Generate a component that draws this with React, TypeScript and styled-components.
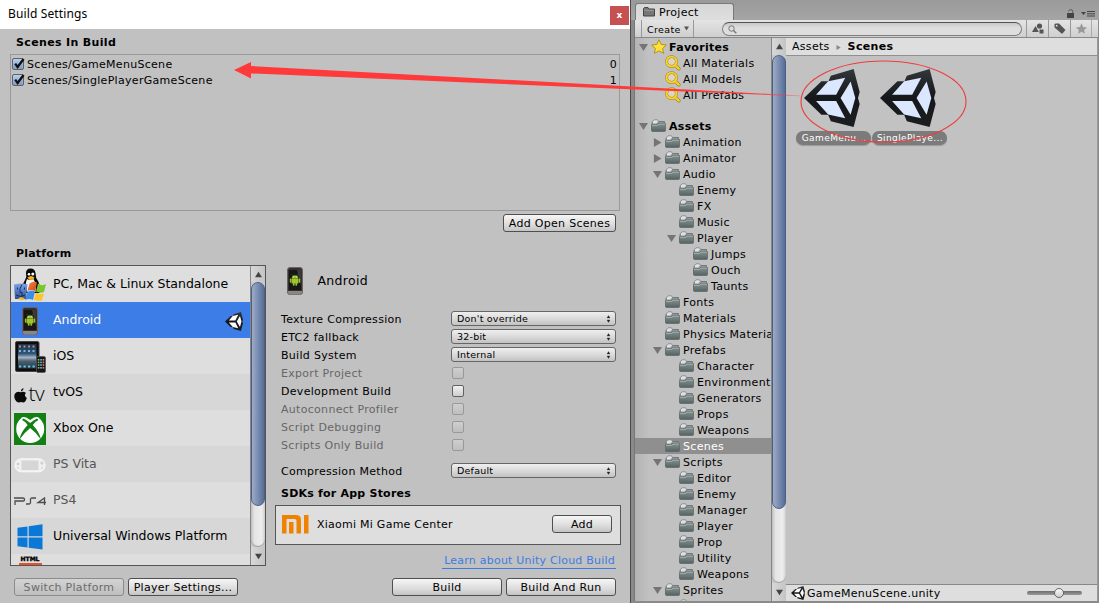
import React from 'react';
import styled, { createGlobalStyle, css } from 'styled-components';

const Global = createGlobalStyle`
  * { box-sizing: border-box; }
  body { margin: 0; overflow: hidden; background: #8a8a8a; }
`;

const Desktop = styled.div`
  position: relative;
  display: flex;
  width: 1099px;
  height: 603px;
  overflow: hidden;
  background: #8a8a8a;
  font: 11px/16px 'DejaVu Sans', sans-serif;
  letter-spacing: 0.3px;
  color: #000;
  white-space: nowrap;
`;

/* ---------- shared controls ---------- */

const Text = styled.span`
  padding-top: 2px;
`;

const Button = styled.button<{ $w: number; $disabled?: boolean }>`
  width: ${(p) => p.$w}px;
  height: 18px;
  padding: 2px 0 0;
  border: 1px solid ${(p) => (p.$disabled ? '#8c8c8c' : '#4f4f4f')};
  border-radius: 3px;
  background: ${(p) =>
    p.$disabled ? 'linear-gradient(#d3d3d3, #bfbfbf)' : 'linear-gradient(#f6f6f6, #dcdcdc 60%, #c4c4c4)'};
  color: ${(p) => (p.$disabled ? '#6c6c6c' : '#000')};
  font: inherit;
  line-height: 14px;
  letter-spacing: 0.3px;
`;

const Heading = styled.div<{ $ls?: number }>`
  font-weight: bold;
  letter-spacing: ${(p) => p.$ls ?? 0.35}px;
`;

const Box = styled.span<{ $blue?: boolean; $disabled?: boolean }>`
  display: flex;
  width: 12px;
  height: 12px;
  margin-bottom: ${(p) => (p.$blue ? 1 : 0)}px;
  border: 1px solid ${(p) => (p.$disabled ? '#999' : '#626262')};
  border-radius: 2px;
  background: ${(p) =>
    p.$blue
      ? 'linear-gradient(#b9cfee, #7d9dcb)'
      : p.$disabled
        ? 'linear-gradient(#cfcfcf, #bebebe)'
        : 'linear-gradient(#f0f0f0, #cfcfcf)'};
`;

const ScrollColumn = styled.div`
  display: flex;
  flex-direction: column;
  flex: none;
  width: 15px;
  border-left: 1px solid #858585;
  background: #c8c8c8;
`;
const ScrollButton = styled.div<{ $h: number }>`
  display: flex;
  align-items: center;
  justify-content: center;
  flex: none;
  height: ${(p) => p.$h}px;
  background: linear-gradient(90deg, #d8d8d8, #c4c4c4);
`;
const ScrollTrack = styled.div`
  flex: 1;
  border-radius: 7px;
  background: linear-gradient(90deg, #c2c2c2, #e4e4e4 25%, #ededed 75%, #d0d0d0);
  box-shadow: inset 0 -1px 1px #999;
`;
const ScrollThumb = styled.div<{ $h: number }>`
  height: ${(p) => p.$h}px;
  border: 1px solid #4c5f83;
  border-radius: 7px;
  background: linear-gradient(90deg, #9dabc4, #8193b4 40%, #637aa2 80%, #556d97);
`;

const Triangle = ({ dir, size = 7, color = '#444' }: { dir: 'up' | 'down' | 'right'; size?: number; color?: string }) => (
  <svg width={size} height={size} viewBox="0 0 10 10">
    <path
      fill={color}
      d={dir === 'up' ? 'M5 1 10 9H0Z' : dir === 'down' ? 'M0 1H10L5 9Z' : 'M1 0 9.5 5 1 10Z'}
    />
  </svg>
);

const UnityLogo = ({ w, h, light = '#dbe6ff' }: { w: number; h: number; light?: string }) => (
  <svg width={w} height={h} viewBox="0 0 167 172" preserveAspectRatio="none">
    <defs>
      <linearGradient id="unityBody" x1="0" y1="0" x2="0" y2="1">
        <stop offset="0" stopColor="#33363a" />
        <stop offset=".5" stopColor="#15171a" />
        <stop offset="1" stopColor="#1c1e20" />
      </linearGradient>
    </defs>
    <path
      fill="url(#unityBody)"
      d="M0 86 52 36H73L80 20 148 0 166 68 161 86 166 104 148 172 80 155 72 136H52Z"
    />
    <path fill={light} d="M36 76 72 36 123 26 96 76ZM36 95H96L123 146 72 135ZM109 86 139 37 153 86 139 136Z" />
  </svg>
);

/* ---------- build settings window ---------- */

const BuildWindow = styled.section`
  display: flex;
  flex-direction: column;
  flex: none;
  width: 630px;
  background: #c1c1c1;
`;
const TitleBar = styled.header`
  display: flex;
  justify-content: space-between;
  align-items: center;
  height: 29px;
  padding: 2px 1px 0 8px;
  background: #fff;
  font: 12px/16px 'Noto Sans', 'Open Sans', sans-serif;
  letter-spacing: 0.13px;
`;
const TitleText = styled.span`
  padding-bottom: 3px;
`;
const CloseButton = styled.button`
  width: 19px;
  height: 19px;
  padding: 0 0 1px;
  border: 0;
  background: #c75050;
  color: #fff;
  font: bold 9px/16px 'DejaVu Sans', sans-serif;
`;
const ScenesHeading = styled(Heading)`
  padding: 6px 0 3px 16px;
`;
const SceneList = styled.div`
  height: 157px;
  margin: 0 10px;
  padding: 1px 2px 0 1px;
  border: 1px solid #999;
`;
const SceneRow = styled.div`
  display: flex;
  align-items: center;
  height: 16px;
  gap: 3px;
  & > :last-child { margin-left: auto; }
`;
const AddScenesRow = styled.div`
  display: flex;
  justify-content: flex-end;
  padding: 3px 14px 0 0;
`;
const PlatformHeading = styled(Heading)`
  padding: 14px 0 3px 16px;
`;
const Columns = styled.div`
  display: flex;
  height: 301px;
  padding-left: 10px;
  gap: 9px;
`;
const PlatformPanel = styled.div`
  display: flex;
  width: 256px;
  border: 1px solid #555;
  overflow: hidden;
`;
const PlatformList = styled.div`
  flex: 1;
  overflow: hidden;
`;
const PlatformRow = styled.div<{ $bg: string; $fg?: string }>`
  display: flex;
  align-items: center;
  height: 36px;
  padding: 0 5px 1px 3px;
  gap: 7px;
  background: ${(p) => p.$bg};
  color: ${(p) => p.$fg ?? '#000'};
  font-size: 12.5px;
  letter-spacing: -0.02px;
`;
const IconSlot = styled.span`
  display: flex;
  align-items: center;
  justify-content: center;
  flex: none;
  width: 32px;
  height: 34px;
  margin-top: 2px;
`;
const ActiveMark = styled.span`
  display: flex;
  margin: 3px 2px 0 auto;
`;
const Settings = styled.div`
  width: 346px;
`;
const PlatformTitle = styled.div`
  display: flex;
  align-items: center;
  gap: 15px;
  height: 32px;
  padding-left: 11.5px;
  margin-bottom: 13px;
  font-size: 12.5px;
`;
const SettingRow = styled.div<{ $disabled?: boolean; $mt?: number }>`
  display: flex;
  align-items: center;
  height: 18px;
  margin-top: ${(p) => p.$mt ?? 0}px;
  padding-left: 6px;
  color: ${(p) => (p.$disabled ? '#676767' : '#000')};
`;
const SettingLabel = styled(Text)`
  width: 170px;
`;
const Select = styled.div`
  display: flex;
  align-items: center;
  justify-content: space-between;
  width: 165px;
  height: 15px;
  margin-bottom: 1px;
  padding: 0 4px 0 5px;
  border: 1px solid #666;
  border-radius: 3px;
  background: linear-gradient(#efefef, #d6d6d6 60%, #c2c2c2);
  font-size: 9.5px;
  line-height: 13px;
  letter-spacing: 0.22px;
`;
const BoxWrap = styled.span`
  padding-left: 1px;
`;
const SdkHeading = styled(Heading)`
  padding: 6px 0 3px 6px;
`;
const SdkCard = styled.div`
  display: flex;
  align-items: center;
  height: 40px;
  padding: 0 8px 2px 6px;
  border: 1px solid #555;
  background: #dedede;
  letter-spacing: 0.25px;
  & > svg { margin: 1px 8px 0 0; }
  & > button { margin-left: auto; }
`;
const LinkRow = styled.div`
  display: flex;
  justify-content: flex-end;
  padding: 7px 5px 0 0;
`;
const Link = styled.a`
  height: 17px;
  padding: 0 1px 0 2px;
  border-bottom: 1px solid #3d7ce0;
  color: #3d7ce0;
  line-height: 18px;
  letter-spacing: 0.22px;
`;
const Footer = styled.footer`
  display: flex;
  gap: 4px;
  padding: 12px 14px 0;
  & > :nth-child(3) { margin-left: auto; }
`;

const Check = () => (
  <svg width="13" height="13" viewBox="0 0 13 13" style={{ margin: '-2px -2px 0 0', flex: 'none', overflow: 'visible' }}>
    <path d="M2.2 6.6 4.6 10 10.6 2" fill="none" stroke="#111" strokeWidth="2.3" />
  </svg>
);

const SelectArrows = () => (
  <svg width="5" height="8" viewBox="0 0 5 8">
    <path d="M1 3 2.5 0.6 4 3ZM1 5 2.5 7.4 4 5Z" fill="#222" stroke="#222" strokeWidth=".3" />
  </svg>
);

const Phone = () => (
  <svg width="16" height="28" viewBox="0 0 16 28">
    <rect x=".5" y=".5" width="15" height="27" rx="2.5" fill="#34302f" stroke="#6b6463" />
    <path d="M1 24h14v1.5q0 2-2 2H3q-2 0-2-2Z" fill="#8d8580" />
    <rect x="2" y="3" width="12" height="20" fill="#171717" />
    <path d="M10 3h4v16Z" fill="#3a3a3a" />
    <path
      d="M4.8 11.2Q5 8.4 8 8.4T11.2 11.2ZM4.8 11.8h6.4v4.4H4.8ZM3 11.8h1.2v3.6H3ZM11.8 11.8H13v3.6h-1.2ZM6 16h1.4v2.4H6ZM8.6 16H10v2.4H8.6ZM5 7.2l1.4 2M11 7.2l-1.4 2"
      fill="#9fc52f"
      stroke="#9fc52f"
      strokeWidth=".3"
    />
    <path d="M6.2 9.6h.8v.7h-.8ZM9 9.6h.8v.7H9Z" fill="#fff" />
  </svg>
);

const DesktopIcon = () => (
  <svg width="32" height="33" viewBox="0 0 32 33">
    <defs>
      <linearGradient id="finder" x1="0" y1="0" x2="0" y2="1">
        <stop offset="0" stopColor="#7fa2e2" />
        <stop offset="1" stopColor="#2b509a" />
      </linearGradient>
      <linearGradient id="flagRed" x1="0" y1="0" x2="1" y2="1">
        <stop offset="0" stopColor="#f08a4a" />
        <stop offset="1" stopColor="#d8400f" />
      </linearGradient>
    </defs>
    <path d="M12 5Q12 .500 16.500 .500T21.500 5q0 5 2.500 8 2.500 4 1.500 12H9.500Q7 18 11 12q2-3 1-7Z" fill="#080808" />
    <path d="M13 11q3 2 6.500 0 3 5 2 13h-8q-3.500-6-.500-13Z" fill="#f4f4f4" />
    <circle cx="15" cy="6.200" r="1.300" fill="#fff" />
    <circle cx="18.800" cy="6" r="1.500" fill="#fff" />
    <path d="M13.500 9.500q3.500-3 7 0-1 2.500-3.500 2.500T13.500 9.500Z" fill="#f5b51a" />
    <path d="M0 16.500q6-1.500 13.500-.500L12 31H1Z" fill="url(#finder)" />
    <path d="M8 16.500q-3 4-2 8h2v6M2 27q5 3 9 0M3.500 19.500v2M10.500 19.500v2" stroke="#162f66" fill="none" />
    <path d="M4 31q3-4 7 0-2 2-7 0Z" fill="#f4b71c" />
    <path d="M15.500 15.500q4-3 7.500-1l-2 8.500q-4-2-7.500 0Z" fill="url(#flagRed)" />
    <path d="M24 15.500q4 3 8 .500L30 24q-4 1.500-8-.500Z" fill="#79c52c" />
    <path d="M13.500 24q4-2.500 7.500-.500l-2 8.500q-4-2-8 0Z" fill="#3b8ee8" />
    <path d="M22 24.500q4 2.500 8 1l-2.200 7q-4 1-7.800-1Z" fill="#fdc52b" />
  </svg>
);

const IosIcon = () => (
  <svg width="32" height="33" viewBox="0 0 32 33">
    <defs>
      <linearGradient id="pad" x1="0" y1="0" x2="0" y2="1">
        <stop offset="0" stopColor="#17324d" />
        <stop offset=".4" stopColor="#33577a" />
        <stop offset=".55" stopColor="#a3b4c2" />
        <stop offset=".7" stopColor="#4c5f70" />
        <stop offset="1" stopColor="#26384a" />
      </linearGradient>
    </defs>
    <rect x="1.500" y="1.500" width="23.500" height="30" rx="1.500" fill="#0d0d0d" stroke="#444" />
    <rect x="4" y="4" width="18.500" height="24.500" fill="url(#pad)" />
    {[5, 9.5, 14, 18.5].map((x) => (
      <g key={x}>
        <rect x={x} y="5.500" width="2" height="2" fill="#c98a72" />
        <rect x={x} y="10" width="2" height="2" fill="#7db4de" />
        <rect x={x} y="25.500" width="2.300" height="2" fill="#62c7d9" />
      </g>
    ))}
    <rect x="22.500" y="16.500" width="9" height="16" rx="1.500" fill="#161616" stroke="#555" strokeWidth=".8" />
    {[19, 21.6, 24.2, 27].map((y) => (
      <g key={y}>
        <rect x="23.800" y={y} width="1.600" height="1.600" fill="#6fc17c" />
        <rect x="26.200" y={y} width="1.600" height="1.600" fill="#7fb1e0" />
        <rect x="28.600" y={y} width="1.600" height="1.600" fill="#d9896b" />
      </g>
    ))}
  </svg>
);

const TvSlot = styled(IconSlot)`
  justify-content: flex-start;
  gap: 1.5px;
  font: 300 21px/20px 'Open Sans', 'Noto Sans', sans-serif;
  letter-spacing: -0.4px;
  & > svg { margin-top: 5px; }
`;
const AppleIcon = () => (
  <svg width="13" height="15" viewBox="0 0 13 15" style={{ flex: 'none' }}>
    <path
      d="M9.500 0Q9.500 2.800 6.800 3.400 6.800 1 9.500 0ZM6.800 4.300Q9.500 2.800 12 5q-2.600 2.400.800 5-1.400 4.500-3.600 4.500Q7 13.600 5 14.500 2.500 14.500.800 11-.800 6 2.500 4.200 4.500 3.400 6.800 4.300Z"
      fill="#0a0a0a"
    />
  </svg>
);
const XboxIcon = () => (
  <svg width="32" height="32" viewBox="0 0 32 32">
    <path fill="#128012" d="M0 0h32v32H0z" />
    <circle cx="16.200" cy="16" r="14" fill="#fff" />
    <path d="M7 4q4-1 9.200 3Q21 3 25.400 4 20.500.500 16.200 1.500 11 .500 7 4Z" fill="#128012" />
    <path d="M9.500 5.500Q13 7 16.200 10 19.500 7 23 5.500L24.500 7Q21 8.500 18.800 12q6.600 7 8.200 14.500Q22 19.500 16.200 15 10.500 19.500 5.500 26.500 7 18.500 13.700 12 11.500 8.500 8 7Z" fill="#128012" />
  </svg>
);
const VitaIcon = () => (
  <svg width="32" height="16" viewBox="0 0 32 16">
    <rect x="1" y="1.800" width="30" height="13" rx="6" fill="#f0f0f0" stroke="#f8f8f8" />
    <rect x="7.500" y="3.500" width="17" height="9.500" fill="#d6d6d6" />
    <circle cx="4" cy="7" r="1.300" fill="#ccc" />
    <path d="M28 4v4M26 6h4M3 11h2M27 11h2" stroke="#ccc" />
  </svg>
);
const Ps4Icon = () => (
  <svg width="32" height="8" viewBox="0 0 32 8">
    <path
      d="M0 1H9Q10.500 1 10.500 2.600T9 4H1V8M12 7h3q1.500 0 1.500-1.500V2.500Q16.500 1 18 1h4M30.500 8V1L24 5.500h8"
      fill="none"
      stroke="#4c4c4c"
      strokeWidth="1.300"
    />
  </svg>
);
const WindowsIcon = () => (
  <svg width="26" height="26" viewBox="0 0 26 26">
    <path
      d="M.500 3.800 10.500 2.400V12.300H.500ZM11.700 2.200 25.500.300V12.300H11.700ZM.500 13.500H10.500V23.600L.500 22.200ZM11.700 13.500H25.500V25.500L11.700 23.700Z"
      fill="#0a78d6"
    />
  </svg>
);
const HtmlSlot = styled(IconSlot)`
  flex-direction: column;
  justify-content: flex-start;
  align-self: flex-start;
  font: 900 6px/6px 'DejaVu Sans', sans-serif;
  -webkit-text-stroke: 0.4px #000;
`;
const HtmlBar = styled.span`
  width: 23px;
  height: 20px;
  margin-top: 1px;
  background: #e0532c;
`;
const MiIcon = () => (
  <svg width="27" height="19" viewBox="0 0 27 19">
    <path d="M0 0H14Q19 0 19 5V18.500H14.500V6Q14.500 4 12.500 4H4.500V18.500H0ZM7 7H11.500V18.500H7ZM22 0H26.500V18.500H22Z" fill="#ef8200" />
  </svg>
);

const SelectRow = ({ label, value, mt }: { label: string; value: string; mt?: number }) => (
  <SettingRow $mt={mt}>
    <SettingLabel>{label}</SettingLabel>
    <Select>
      {value}
      <SelectArrows />
    </Select>
  </SettingRow>
);
const ToggleRow = ({ label, disabled }: { label: string; disabled?: boolean }) => (
  <SettingRow $disabled={disabled}>
    <SettingLabel>{label}</SettingLabel>
    <BoxWrap>
      <Box $disabled={disabled} />
    </BoxWrap>
  </SettingRow>
);

const LIGHT = '#dedede';
const DARK = '#d7d7d7';

const BuildSettings = () => (
  <BuildWindow>
    <TitleBar>
      <TitleText>Build Settings</TitleText>
      <CloseButton>x</CloseButton>
    </TitleBar>
    <ScenesHeading>Scenes In Build</ScenesHeading>
    <SceneList>
      {['Scenes/GameMenuScene', 'Scenes/SinglePlayerGameScene'].map((name, i) => (
        <SceneRow key={name}>
          <Box $blue>
            <Check />
          </Box>
          <Text>{name}</Text>
          <Text>{i}</Text>
        </SceneRow>
      ))}
    </SceneList>
    <AddScenesRow>
      <Button $w={113}>Add Open Scenes</Button>
    </AddScenesRow>
    <PlatformHeading $ls={0.2}>Platform</PlatformHeading>
    <Columns>
      <PlatformPanel>
        <PlatformList>
          <PlatformRow $bg={LIGHT}><IconSlot><DesktopIcon /></IconSlot>PC, Mac &amp; Linux Standalone</PlatformRow>
          <PlatformRow $bg="#3d7de7" $fg="#fff">
            <IconSlot><Phone /></IconSlot>Android
            <ActiveMark><UnityLogo w={18} h={19} light="#fff" /></ActiveMark>
          </PlatformRow>
          <PlatformRow $bg={LIGHT}><IconSlot><IosIcon /></IconSlot>iOS</PlatformRow>
          <PlatformRow $bg={DARK}><TvSlot><AppleIcon />tv</TvSlot>tvOS</PlatformRow>
          <PlatformRow $bg={LIGHT}><IconSlot><XboxIcon /></IconSlot>Xbox One</PlatformRow>
          <PlatformRow $bg={DARK} $fg="#555"><IconSlot><VitaIcon /></IconSlot>PS Vita</PlatformRow>
          <PlatformRow $bg={LIGHT} $fg="#555"><IconSlot><Ps4Icon /></IconSlot>PS4</PlatformRow>
          <PlatformRow $bg={DARK}><IconSlot><WindowsIcon /></IconSlot>Universal Windows Platform</PlatformRow>
          <PlatformRow $bg={LIGHT}><HtmlSlot>HTML<HtmlBar /></HtmlSlot></PlatformRow>
        </PlatformList>
        <ScrollColumn>
          <ScrollButton $h={16}><Triangle dir="up" /></ScrollButton>
          <ScrollTrack><ScrollThumb $h={224} /></ScrollTrack>
          <ScrollButton $h={18}><Triangle dir="down" /></ScrollButton>
        </ScrollColumn>
      </PlatformPanel>
      <Settings>
        <PlatformTitle><Phone />Android</PlatformTitle>
        <SelectRow label="Texture Compression" value="Don't override" />
        <SelectRow label="ETC2 fallback" value="32-bit" />
        <SelectRow label="Build System" value="Internal" />
        <ToggleRow label="Export Project" disabled />
        <ToggleRow label="Development Build" />
        <ToggleRow label="Autoconnect Profiler" disabled />
        <ToggleRow label="Script Debugging" disabled />
        <ToggleRow label="Scripts Only Build" disabled />
        <SelectRow label="Compression Method" value="Default" mt={8} />
        <SdkHeading $ls={0.22}>SDKs for App Stores</SdkHeading>
        <SdkCard>
          <MiIcon />
          <Text>Xiaomi Mi Game Center</Text>
          <Button $w={60}>Add</Button>
        </SdkCard>
        <LinkRow><Link>Learn about Unity Cloud Build</Link></LinkRow>
      </Settings>
    </Columns>
    <Footer>
      <Button $w={110} $disabled>Switch Platform</Button>
      <Button $w={110}>Player Settings...</Button>
      <Button $w={110}>Build</Button>
      <Button $w={110}>Build And Run</Button>
    </Footer>
  </BuildWindow>
);

/* ---------- project window ---------- */

const ProjectWindow = styled.section`
  display: flex;
  flex-direction: column;
  flex: 1;
  min-width: 0;
  padding-bottom: 2px;
  border-left: 1px solid #4a4a4a;
  background: #8a8a8a;
`;
const TabStrip = styled.div`
  display: flex;
  justify-content: space-between;
  height: 20px;
  padding: 3px 3px 0 4px;
  background: linear-gradient(#9a9a9a, #a5a5a5);
`;
const Tab = styled.div`
  display: flex;
  align-items: center;
  gap: 4px;
  width: 99px;
  padding-left: 7px;
  border: 1px solid #787878;
  border-bottom: 0;
  border-radius: 3px 3px 0 0;
  background: linear-gradient(#d6d6d6, #dedede);
`;
const TabTools = styled.div`
  display: flex;
  align-items: center;
  gap: 6px;
  padding-top: 4px;
`;
const Frame = styled.div`
  display: flex;
  flex-direction: column;
  flex: 1;
  min-height: 0;
  margin: 0 1px 0 3px;
  border-left: 1px solid #777;
`;
const Toolbar = styled.div`
  display: flex;
  align-items: stretch;
  height: 18px;
  padding-left: 6px;
  border-bottom: 1px solid #888;
  background: linear-gradient(#e4e4e4, #cfcfcf);
`;
const CreateButton = styled.div`
  display: flex;
  align-items: center;
  justify-content: space-between;
  width: 53px;
  padding: 0 4px 0 5px;
  border: solid #999;
  border-width: 0 1px;
  font-size: 9.5px;
  letter-spacing: 0.35px;
`;
const Search = styled.div`
  display: flex;
  align-items: center;
  width: 300px;
  height: 14px;
  margin: 2px 4px 0 28px;
  padding-left: 5px;
  border: 1px solid #808080;
  border-top-color: #555;
  border-radius: 7px;
  background: linear-gradient(#c8c8c8, #dedede 40%);
`;
const ToolButton = styled.div`
  display: flex;
  align-items: center;
  justify-content: center;
  width: 22px;
  border-left: 1px solid #999;
  &:last-child { border-right: 1px solid #aaa; }
`;
const Panes = styled.div`
  display: flex;
  flex: 1;
  min-height: 0;
`;
const Tree = styled.div`
  width: 136px;
  padding-top: 1px;
  overflow: hidden;
  background: linear-gradient(90deg, #b4b4b4, #c1c1c1 14px);
`;
const TreeRow = styled.div<{ $level: number; $bold?: boolean; $selected?: boolean; $gap?: boolean }>`
  display: flex;
  align-items: center;
  height: 16px;
  margin-top: ${(p) => (p.$gap ? 15 : 0)}px;
  padding-left: ${(p) => 4 + p.$level * 14}px;
  ${(p) => p.$bold && css`font-weight: bold;`}
  ${(p) => p.$selected && css`background: #8f8f8f; color: #fff;`}
`;
const ArrowSlot = styled.span`
  display: flex;
  flex: none;
  width: 12px;
`;
const TreeIcon = styled.span`
  display: flex;
  flex: none;
  width: 18px;
  margin-bottom: 1px;
`;
const Content = styled.div`
  display: flex;
  flex-direction: column;
  flex: 1;
  border-right: 1px solid #999;
  background: #c2c2c2;
`;
const Breadcrumb = styled.div`
  display: flex;
  align-items: center;
  gap: 6.5px;
  height: 18px;
  padding: 1px 0 0 6px;
  border-bottom: 1px solid #909090;
  background: #dedede;
`;
const AssetGrid = styled.div`
  display: flex;
  flex: 1;
  gap: 1px;
  padding: 13px 0 0 10px;
`;
const Asset = styled.div`
  display: flex;
  flex-direction: column;
  align-items: center;
  width: 75px;
  & > svg { margin-right: 3px; }
`;
const AssetName = styled.span`
  width: 75px;
  height: 14px;
  margin-top: 4px;
  padding-left: 1px;
  border-radius: 7px;
  background: #7b7b7b;
  box-shadow: 0 1px 1px #999;
  color: #fff;
  font-size: 9px;
  line-height: 15px;
  letter-spacing: 0.4px;
  text-align: center;
`;
const StatusBar = styled.div`
  display: flex;
  align-items: center;
  height: 17px;
  padding: 0 15px 0 5px;
  border-top: 1px solid #888;
  background: #dedede;
  & > span { margin-left: 2px; }
`;
const Slider = styled.div`
  display: flex;
  align-items: center;
  justify-content: center;
  width: 55px;
  height: 4px;
  margin-left: auto;
  padding-left: 9px;
  border-radius: 2px;
  background: linear-gradient(#6e6e6e, #9a9a9a);
`;
const Knob = styled.div`
  flex: none;
  width: 10px;
  height: 10px;
  border: 1px solid #666;
  border-radius: 50%;
  background: linear-gradient(#fafafa, #cfcfcf);
`;

const Folder = () => (
  <svg width="15" height="13" viewBox="0 0 15 13">
    <defs>
      <linearGradient id="folder" x1="0" y1="0" x2="0" y2="1">
        <stop offset="0" stopColor="#869292" />
        <stop offset="1" stopColor="#566161" />
      </linearGradient>
    </defs>
    <path d="M1 11V3.500L2 2.500H13.500V11Z" fill="#8b9696" stroke="#6a7474" strokeWidth=".900" />
    <path d="M1.500 5V2.500L3 .800H6.500L7.500 2.600 5.800 5Z" fill="#dfe2e2" stroke="#7b8484" strokeWidth=".800" />
    <path d="M.500 5.800H6L7.500 4.500H14.500V11.500q0 1-1 1h-12q-1 0-1-1Z" fill="url(#folder)" stroke="#5a6565" strokeWidth=".700" />
    <path d="M1 6.400H6.500L8 5.100H14" stroke="#b0baba" strokeWidth=".800" fill="none" />
  </svg>
);
const TabFolder = () => (
  <svg width="12" height="10" viewBox="0 0 12 10">
    <path d="M.500 9V1.500L1.500.500H5L6 2H11.500V9Z" fill="#777" stroke="#444" />
    <path d="M1 3.300h10" stroke="#a5a5a5" strokeWidth=".800" />
  </svg>
);
const Star = () => (
  <svg width="16" height="15" viewBox="0 0 16 15">
    <path d="M8 .800 10.200 5.400 15.300 6 11.600 9.400 12.600 14.300 8 11.900 3.400 14.300 4.400 9.400.700 6 5.800 5.400Z" fill="#ffe13a" stroke="#b28a10" strokeWidth=".900" />
  </svg>
);
const Lens = () => (
  <svg width="16" height="16" viewBox="0 0 16 16">
    <path d="M9.800 10 13.800 13.800" stroke="#a57d12" strokeWidth="3.400" strokeLinecap="round" />
    <circle cx="6.500" cy="6.500" r="4.900" fill="#d9d6c4" stroke="#a57d12" strokeWidth="2.800" />
    <circle cx="6.500" cy="6.500" r="4.900" fill="none" stroke="#f8d42c" strokeWidth="1.900" />
    <path d="M10 10.200 13.800 13.800" stroke="#f8d42c" strokeWidth="2.200" strokeLinecap="round" />
  </svg>
);

type Node = { name: string; level: number; open?: boolean; closed?: boolean; icon?: 'star' | 'lens'; selected?: boolean };
const nodes: Node[] = [
  { name: 'Favorites', level: 0, open: true, icon: 'star' },
  { name: 'All Materials', level: 1, icon: 'lens' },
  { name: 'All Models', level: 1, icon: 'lens' },
  { name: 'All Prefabs', level: 1, icon: 'lens' },
  { name: 'Assets', level: 0, open: true },
  { name: 'Animation', level: 1, closed: true },
  { name: 'Animator', level: 1, closed: true },
  { name: 'Audio', level: 1, open: true },
  { name: 'Enemy', level: 2 },
  { name: 'FX', level: 2 },
  { name: 'Music', level: 2 },
  { name: 'Player', level: 2, open: true },
  { name: 'Jumps', level: 3 },
  { name: 'Ouch', level: 3 },
  { name: 'Taunts', level: 3 },
  { name: 'Fonts', level: 1 },
  { name: 'Materials', level: 1 },
  { name: 'Physics Materials', level: 1 },
  { name: 'Prefabs', level: 1, open: true },
  { name: 'Character', level: 2 },
  { name: 'Environment', level: 2 },
  { name: 'Generators', level: 2 },
  { name: 'Props', level: 2 },
  { name: 'Weapons', level: 2 },
  { name: 'Scenes', level: 1, selected: true },
  { name: 'Scripts', level: 1, open: true },
  { name: 'Editor', level: 2 },
  { name: 'Enemy', level: 2 },
  { name: 'Manager', level: 2 },
  { name: 'Player', level: 2 },
  { name: 'Prop', level: 2 },
  { name: 'Utility', level: 2 },
  { name: 'Weapons', level: 2 },
  { name: 'Sprites', level: 1, open: true },
  { name: '', level: 2 },
];

const Project = () => (
  <ProjectWindow>
    <TabStrip>
      <Tab><TabFolder /><Text>Project</Text></Tab>
      <TabTools>
        <svg width="9" height="9" viewBox="0 0 9 9">
          <path d="M1 4h7v5H1Z" fill="#444" />
          <path d="M2.500 2.500Q3 .600 4.800.600T6.800 2.500V4" fill="none" stroke="#555" />
        </svg>
        <svg width="15" height="7" viewBox="0 0 15 7">
          <path d="M0 2H5L2.500 5Z" fill="#444" />
          <path d="M6 1.500h8M6 3.800h8M6 6h8" stroke="#444" />
        </svg>
      </TabTools>
    </TabStrip>
    <Frame>
      <Toolbar>
        <CreateButton><Text>Create</Text><Triangle dir="down" size={5} color="#555" /></CreateButton>
        <Search>
          <svg width="9" height="9" viewBox="0 0 9 9">
            <circle cx="3.500" cy="3.500" r="2.700" fill="none" stroke="#777" />
            <path d="M5.500 5.500 8.300 8.300" stroke="#777" strokeWidth="1.400" />
          </svg>
        </Search>
        <ToolButton>
          <svg width="12" height="11" viewBox="0 0 12 11">
            <path d="M3.500 3 6.800 9H0Z" fill="#555" />
            <circle cx="7.500" cy="3" r="2.600" fill="#555" />
            <path d="M7.500 6.500h4V10.500h-4Z" fill="#555" />
          </svg>
        </ToolButton>
        <ToolButton>
          <svg width="12" height="11" viewBox="0 0 12 11">
            <path d="M.500 1.500 1.500.500H5L11.500 7 8.500 10.500H7.500L.500 4.500Z" fill="#555" />
            <circle cx="2.700" cy="2.700" r=".900" fill="#ddd" />
          </svg>
        </ToolButton>
        <ToolButton>
          <svg width="11" height="11" viewBox="0 0 16 15">
            <path d="M8 0 10.300 5.300 16 5.900 11.800 9.600 12.900 15 8 12.200 3.100 15 4.200 9.600 0 5.900 5.700 5.300Z" fill="#999" />
          </svg>
        </ToolButton>
      </Toolbar>
      <Panes>
        <Tree>
          {nodes.map((n, i) => (
            <TreeRow key={i} $level={n.level} $bold={n.level === 0} $selected={n.selected} $gap={n.name === 'Assets'}>
              <ArrowSlot>
                {n.open && <Triangle dir="down" size={9} color="#757575" />}
                {n.closed && <Triangle dir="right" size={9} color="#757575" />}
              </ArrowSlot>
              <TreeIcon>{n.icon === 'star' ? <Star /> : n.icon === 'lens' ? <Lens /> : <Folder />}</TreeIcon>
              <Text>{n.name}</Text>
            </TreeRow>
          ))}
        </Tree>
        <ScrollColumn>
          <ScrollButton $h={17}><Triangle dir="up" /></ScrollButton>
          <ScrollTrack><ScrollThumb $h={454} /></ScrollTrack>
          <ScrollButton $h={18}><Triangle dir="down" /></ScrollButton>
        </ScrollColumn>
        <Content>
          <Breadcrumb>
            <span>Assets</span>
            <Triangle dir="right" size={5} color="#888" />
            <Heading $ls={0.35}>Scenes</Heading>
          </Breadcrumb>
          <AssetGrid>
            {['GameMenu...', 'SinglePlaye...'].map((name) => (
              <Asset key={name}>
                <UnityLogo w={56} h={58} />
                <AssetName>{name}</AssetName>
              </Asset>
            ))}
          </AssetGrid>
          <StatusBar>
            <UnityLogo w={14} h={14} light="#fff" />
            <Text>GameMenuScene.unity</Text>
            <Slider><Knob /></Slider>
          </StatusBar>
        </Content>
      </Panes>
    </Frame>
  </ProjectWindow>
);

/* ---------- hand-drawn annotation over both windows ---------- */

const Annotation = styled.svg`
  position: absolute;
  inset: 0;
  pointer-events: none;
`;

export default function App() {
  return (
    <Desktop>
      <Global />
      <BuildSettings />
      <Project />
      <Annotation width="1099" height="603" viewBox="0 0 1099 603">
        <defs>
          <linearGradient id="fade" gradientUnits="userSpaceOnUse" x1="234" y1="0" x2="800" y2="0">
            <stop offset="0" stopColor="#ff3a3a" />
            <stop offset=".92" stopColor="#ff3a3a" />
            <stop offset="1" stopColor="#ff3a3a" stopOpacity=".3" />
          </linearGradient>
        </defs>
        <path fill="url(#fade)" d="M234 70 251 62V66L800 95.600V96.200L251 73.500V78.500Z" />
        <ellipse cx="883.500" cy="101.500" rx="82.500" ry="40.500" fill="none" stroke="#f03c3c" strokeWidth="1.100" />
      </Annotation>
    </Desktop>
  );
}
